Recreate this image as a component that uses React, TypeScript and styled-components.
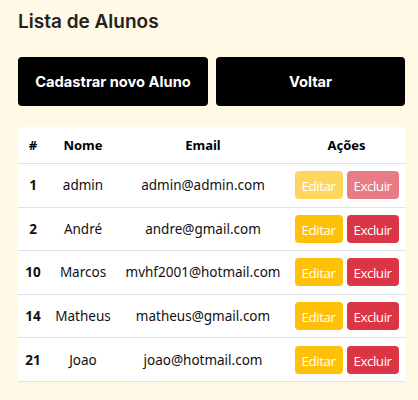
import React from "react";
import styled, { createGlobalStyle } from "styled-components";

interface Aluno {
  id: number;
  nome: string;
  email: string;
  locked?: boolean;
}

const alunos: Aluno[] = [
  { id: 1, nome: "admin", email: "admin@admin.com", locked: true },
  { id: 2, nome: "André", email: "andre@gmail.com" },
  { id: 10, nome: "Marcos", email: "mvhf2001@hotmail.com" },
  { id: 14, nome: "Matheus", email: "matheus@gmail.com" },
  { id: 21, nome: "Joao", email: "joao@hotmail.com" },
];

const GlobalStyle = createGlobalStyle`
  html, body {
    margin: 0;
    background: #fff9e5;
  }
  body {
    font-family: "Noto Sans", "Open Sans", sans-serif;
  }
`;

const Page = styled.div`
  width: 387px;
  padding: 10px 13px 0 18px;
`;

const Title = styled.h1`
  margin: 0;
  font-family: Inter, "Noto Sans", sans-serif;
  font-size: 19px;
  font-weight: 600;
  color: #222;
  line-height: 24px;
`;

const Actions = styled.div`
  display: grid;
  grid-template-columns: 190px 189px;
  gap: 8px;
  margin-top: 23px;
`;

const BigButton = styled.button`
  height: 49px;
  border: none;
  border-radius: 4px;
  background: #000;
  color: #fff;
  font-family: Inter, "Noto Sans", sans-serif;
  font-size: 14.7px;
  font-weight: 700;
  cursor: pointer;
`;

const Table = styled.table`
  margin-top: 21px;
  width: 387px;
  border-collapse: collapse;
  background: #fff;
  table-layout: fixed;
`;

const Th = styled.th<{ $w: number }>`
  width: ${(p) => p.$w}px;
  height: 36px;
  padding: 0;
  font-size: 13px;
  font-weight: 700;
  color: #000;
  text-align: center;
  border-bottom: 1.5px solid #dee2e6;
`;

const Td = styled.td<{ $bold?: boolean }>`
  height: 42.6px;
  padding: 0;
  font-size: 13.5px;
  font-weight: ${(p) => (p.$bold ? 700 : 400)};
  color: #111;
  text-align: center;
  border-bottom: 1.5px solid #dee2e6;
  white-space: nowrap;
`;

const ActionCell = styled.div`
  display: flex;
  justify-content: center;
  gap: 4px;
`;

const SmallButton = styled.button<{ $kind: "edit" | "delete"; $faded?: boolean }>`
  height: 28px;
  width: ${(p) => (p.$kind === "edit" ? 48 : 52)}px;
  padding: 2px 0 0;
  border: none;
  border-radius: 4px;
  background: ${(p) => (p.$kind === "edit" ? "#ffc107" : "#dc3545")};
  opacity: ${(p) => (p.$faded ? 0.65 : 1)};
  color: #fff;
  font-family: "Open Sans", "Noto Sans", sans-serif;
  font-size: 13.5px;
  letter-spacing: -0.5px;
`;

export default function App() {
  return (
    <>
      <GlobalStyle />
      <Page>
        <Title>Lista de Alunos</Title>
        <Actions>
          <BigButton>Cadastrar novo Aluno</BigButton>
          <BigButton>Voltar</BigButton>
        </Actions>
        <Table>
          <thead>
            <tr>
              <Th $w={30}>#</Th>
              <Th $w={70}>Nome</Th>
              <Th $w={170}>Email</Th>
              <Th $w={117}>Ações</Th>
            </tr>
          </thead>
          <tbody>
            {alunos.map((a) => (
              <tr key={a.id}>
                <Td $bold>{a.id}</Td>
                <Td>{a.nome}</Td>
                <Td>{a.email}</Td>
                <Td>
                  <ActionCell>
                    <SmallButton $kind="edit" $faded={a.locked}>
                      Editar
                    </SmallButton>
                    <SmallButton $kind="delete" $faded={a.locked}>
                      Excluir
                    </SmallButton>
                  </ActionCell>
                </Td>
              </tr>
            ))}
          </tbody>
        </Table>
      </Page>
    </>
  );
}
